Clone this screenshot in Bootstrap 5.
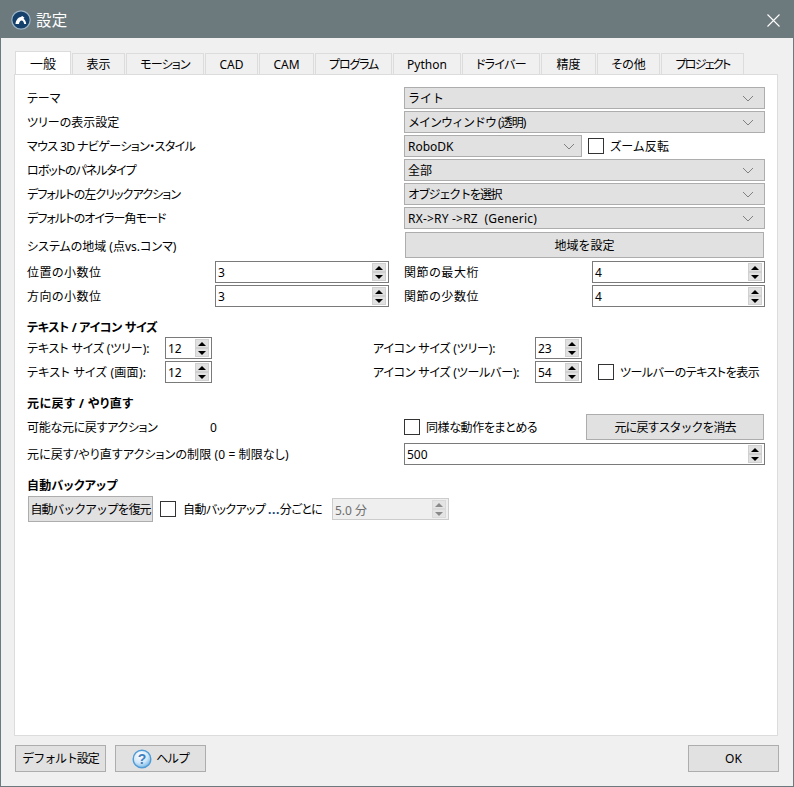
<!DOCTYPE html>
<html lang="ja">
<head>
<meta charset="utf-8">
<title>設定</title>
<link href="https://cdn.jsdelivr.net/npm/bootstrap@5.3.0/dist/css/bootstrap.min.css" rel="stylesheet">
<style>
html,body{margin:0;padding:0;background:#f0f0f0;overflow:hidden}
body{font-family:"Noto Sans","Noto Sans CJK JP",sans-serif;font-size:12px;line-height:18px;color:#000;font-feature-settings:"palt";white-space:nowrap}
.win{width:794px;height:787px;border:1px solid #6c797d;border-top:0;background:#f0f0f0}
.titlebar{height:38px;background:#6c797d;color:#fff;font-size:15.5px;padding:2px 13px 0 10px}
.titlebar span{margin-left:5px;letter-spacing:.3px}
.main{padding:0 15px 0 13px}
.tabbar{height:23px;margin:13px 0 0 1px;flex-wrap:nowrap;border:0}
.tabbar .nav-link{height:21px;margin:0 1px 0 0;padding:1px 0 0;border:1px solid #dcdcdc;border-bottom:0;border-radius:0;background:#f0f0f0;color:#000;font-size:12px;line-height:20px;text-align:center}
.tabbar .nav-link.active{height:23px;background:#fff;color:#000;font-size:13px;border-color:#dcdcdc;margin-bottom:0}
.tabbar .nav-item{display:flex;align-items:flex-end}
.pane{height:662px;background:#fff;border:1px solid #dcdcdc;padding:12px 12px 0}
.rw{height:22px;margin-bottom:2px}
.lab1{width:377px;flex:none}
.txt{padding-top:1px}
.form-select.dd{height:22px;min-height:0;padding:1px 0 0 3px;border:1px solid #adadad;border-radius:0;background-color:#e1e1e1;font-size:12px;line-height:19px;color:#000;background-size:12px 7px;background-position:right 10px center;background-image:url("data:image/svg+xml,%3Csvg xmlns='http://www.w3.org/2000/svg' viewBox='0 0 12 7'%3E%3Cpath d='M1 1l5 5 5-5' fill='none' stroke='%23808080'/%3E%3C/svg%3E");flex:1 1 0;box-shadow:none}
.dd.narrow{flex:0 0 178px;width:178px;background-position:right 6px center}
.btn.qbtn{--bs-btn-padding-x:0;--bs-btn-padding-y:0;--bs-btn-font-size:12px;--bs-btn-line-height:18px;--bs-btn-border-radius:0;--bs-btn-bg:#e1e1e1;--bs-btn-border-color:#adadad;--bs-btn-color:#000;--bs-btn-hover-bg:#e1e1e1;--bs-btn-hover-border-color:#adadad;height:26px;padding-top:1px}
.regionbtn{width:359px;margin:1px 0 3px 1px}
.spin{height:22px;border:1px solid #7a7a7a;background:#fff;padding:1px 2px 1px 0;flex:none}
.spin input{flex:1 1 0;min-width:0;border:0;padding:1px 0 0 2px;height:18px;font-size:12px;line-height:17px;background:transparent;color:#000;box-shadow:none;border-radius:0}
.arrows{width:14px;height:18px;margin-left:auto;flex:none}
.arrows i{display:flex;align-items:center;justify-content:center;height:9px;background:#e1e1e1;border:1px solid #d0d0d0}
.arrows i::before{content:"";border-left:4px solid transparent;border-right:4px solid transparent}
.arrows i:first-child::before{border-bottom:4px solid #000}
.arrows i:last-child::before{border-top:4px solid #000}
.spin.off{border-color:#ccc;background:#efefef}
.spin.off input{color:#6d6d6d;background:transparent}
.spin.off i{background:#e4e4e4;border-color:#dadada}
.spin.off i:first-child::before{border-bottom-color:#8a8a8a}
.spin.off i:last-child::before{border-top-color:#8a8a8a}
.w174{width:174px}.w173{width:173px}.w47{width:47px}.w117{width:117px}
.lab188{width:188px;flex:none}.lab138{width:138px;flex:none}.lab161{width:161px;flex:none}.lab162{width:162px;flex:none}.lab183{width:183px;flex:none}.lab194{width:194px;flex:none}
.chk.form-check-input{width:16px;height:16px;margin:0;border:1px solid #333;border-radius:0;flex:none;background-color:#fff;float:none}
.gap6{margin-left:6px}
.gap7{margin-left:7px}
.chk.form-check-input.gap6{margin-left:6px}
.chk.form-check-input.gap7{margin-left:7px}
.cap{font-weight:700;height:18px;line-height:18px;margin:11px 0 1px;padding-top:1px}
.cap.two{margin-bottom:2px}
.tallrw{height:26px;margin-bottom:3px}
.undobtn{width:178px;margin:0 1px 0 auto}
.bkbtn{width:125px;margin-left:1px}
.foot{margin:9px -1px 0 1px}
.fbtn{width:91px;height:27px!important}
.ms9{margin-left:9px}
.dots{color:#0b3e7a;font-weight:700;letter-spacing:.6px}
.wide{flex:1 1 0}
.bktxt{width:149px;flex:none}
.tw0{width:56px}.tw1{width:53px}.tw2{width:78px}.tw3{width:53px}.tw4{width:55px}.tw5{width:77px}.tw6{width:68px}.tw7{width:78px}.tw8{width:55px}.tw9{width:63px}.tw10{width:83px}
.tk-17{letter-spacing:-1.7px}.tk-12{letter-spacing:-1.2px}.tk-11{letter-spacing:-1.1px}.tk-10{letter-spacing:-1px}.tk-9{letter-spacing:-.9px}.tk-8{letter-spacing:-.8px}.tk-6{letter-spacing:-.6px}.tk-5{letter-spacing:-.5px}.tk-4{letter-spacing:-.4px}.tk-3{letter-spacing:-.3px}.tk-2{letter-spacing:-.2px}.tk-1{letter-spacing:-.1px}
.tk1{letter-spacing:.1px}.tk2{letter-spacing:.2px}.tk3{letter-spacing:.3px}.tk5{letter-spacing:.5px}.tk6{letter-spacing:.6px}
</style>
</head>
<body>
<div class="win d-flex flex-column">
  <div class="titlebar d-flex align-items-center">
    <svg width="20" height="20" viewBox="0 0 20 20" aria-hidden="true"><circle cx="10" cy="10" r="9.2" fill="#15406b" stroke="#9db4c4" stroke-width="1.2"/><path d="M4.500 14c.3-3.500 2.200-6.500 5.200-7l1.600-1 2.200 1.800-1 .9c1.700 1 2.500 3.300 2.700 5.300h-2c-.3-1.800-1.300-3.300-2.600-3.400-1.300 0-2.300 1.500-2.600 3.400z" fill="#fff"/></svg>
    <span>設定</span>
    <svg class="ms-auto" width="13" height="13" viewBox="0 0 13 13" aria-hidden="true"><path d="M.5.500l12 12M12.500.500l-12 12" stroke="#fff" stroke-width="1.100" fill="none"/></svg>
  </div>
  <div class="main">
    <ul class="nav nav-tabs tabbar">
      <li class="nav-item"><a class="nav-link active tw0">一般</a></li>
      <li class="nav-item"><a class="nav-link tw1">表示</a></li>
      <li class="nav-item"><a class="nav-link tw2 tk-8">モーション</a></li>
      <li class="nav-item"><a class="nav-link tw3">CAD</a></li>
      <li class="nav-item"><a class="nav-link tw4">CAM</a></li>
      <li class="nav-item"><a class="nav-link tw5 tk-12">プログラム</a></li>
      <li class="nav-item"><a class="nav-link tw6">Python</a></li>
      <li class="nav-item"><a class="nav-link tw7 tk-6">ドライバー</a></li>
      <li class="nav-item"><a class="nav-link tw8">精度</a></li>
      <li class="nav-item"><a class="nav-link tw9">その他</a></li>
      <li class="nav-item"><a class="nav-link tw10 tk-17">プロジェクト</a></li>
    </ul>
    <div class="pane">
      <div class="rw d-flex align-items-center"><div class="lab1 txt">テーマ</div><select class="form-select dd"><option>ライト</option></select></div>
      <div class="rw d-flex align-items-center"><div class="lab1 txt">ツリーの表示設定</div><select class="form-select dd tk-10"><option>メインウィンドウ (透明)</option></select></div>
      <div class="rw d-flex align-items-center"><div class="lab1 txt tk-6">マウス 3D ナビゲーション・スタイル</div><select class="form-select dd narrow"><option>RoboDK</option></select><input class="form-check-input chk gap6" type="checkbox" aria-label="ズーム反転"><span class="gap6 txt tk3">ズーム反転</span></div>
      <div class="rw d-flex align-items-center"><div class="lab1 txt tk-10">ロボットのパネルタイプ</div><select class="form-select dd"><option>全部</option></select></div>
      <div class="rw d-flex align-items-center"><div class="lab1 txt tk-9">デフォルトの左クリックアクション</div><select class="form-select dd tk-17"><option>オブジェクトを選択</option></select></div>
      <div class="rw d-flex align-items-center"><div class="lab1 txt tk-9">デフォルトのオイラー角モード</div><select class="form-select dd tk2"><option>RX-&gt;RY -&gt;RZ &nbsp;(Generic)</option></select></div>
      <div class="d-flex align-items-center"><div class="lab1 txt">システムの地域 (点vs.コンマ)</div><button class="btn qbtn regionbtn" type="button">地域を設定</button></div>
      <div class="rw d-flex align-items-center">
        <div class="lab188 txt tk5">位置の小数位</div>
        <div class="spin w174 d-flex"><input class="form-control" value="3" aria-label="位置の小数位"><span class="arrows"><i></i><i></i></span></div>
        <div class="lab188 ms-auto txt tk6">関節の最大桁</div>
        <div class="spin w173 d-flex"><input class="form-control" value="4" aria-label="関節の最大桁"><span class="arrows"><i></i><i></i></span></div>
      </div>
      <div class="rw d-flex align-items-center">
        <div class="lab188 txt tk5">方向の小数位</div>
        <div class="spin w174 d-flex"><input class="form-control" value="3" aria-label="方向の小数位"><span class="arrows"><i></i><i></i></span></div>
        <div class="lab188 ms-auto txt tk6">関節の少数位</div>
        <div class="spin w173 d-flex"><input class="form-control" value="4" aria-label="関節の少数位"><span class="arrows"><i></i><i></i></span></div>
      </div>

      <div class="cap tk-3">テキスト / アイコン サイズ</div>
      <div class="rw d-flex align-items-center">
        <div class="lab138 txt tk-1">テキスト サイズ (ツリー):</div>
        <div class="spin w47 d-flex"><input class="form-control" value="12" aria-label="テキスト サイズ (ツリー)"><span class="arrows"><i></i><i></i></span></div>
        <div class="lab161"></div>
        <div class="lab162 txt tk-2">アイコン サイズ (ツリー):</div>
        <div class="spin w47 d-flex"><input class="form-control" value="23" aria-label="アイコン サイズ (ツリー)"><span class="arrows"><i></i><i></i></span></div>
      </div>
      <div class="rw d-flex align-items-center">
        <div class="lab138 txt tk3">テキスト サイズ (画面):</div>
        <div class="spin w47 d-flex"><input class="form-control" value="12" aria-label="テキスト サイズ (画面)"><span class="arrows"><i></i><i></i></span></div>
        <div class="lab161"></div>
        <div class="lab162 txt tk-2">アイコン サイズ (ツールバー):</div>
        <div class="spin w47 d-flex"><input class="form-control" value="54" aria-label="アイコン サイズ (ツールバー)"><span class="arrows"><i></i><i></i></span></div>
        <input class="form-check-input chk ms-3" type="checkbox" aria-label="ツールバーのテキストを表示"><span class="gap6 txt tk-5">ツールバーのテキストを表示</span>
      </div>

      <div class="cap two tk5">元に戻す / やり直す</div>
      <div class="tallrw d-flex align-items-center">
        <div class="lab183 txt tk-3">可能な元に戻すアクション</div>
        <div class="lab194 txt">0</div>
        <input class="form-check-input chk" type="checkbox" aria-label="同様な動作をまとめる"><span class="gap6 txt tk-4">同様な動作をまとめる</span>
        <button class="btn qbtn undobtn tk-10" type="button">元に戻すスタックを消去</button>
      </div>
      <div class="rw d-flex align-items-center">
        <div class="lab1 txt tk1">元に戻す/やり直すアクションの制限 (0 = 制限なし)</div>
        <div class="spin wide d-flex"><input class="form-control" value="500" aria-label="制限"><span class="arrows"><i></i><i></i></span></div>
      </div>

      <div class="cap two tk2">自動バックアップ</div>
      <div class="tallrw d-flex align-items-center">
        <button class="btn qbtn bkbtn tk-11" type="button">自動バックアップを復元</button>
        <input class="form-check-input chk gap7" type="checkbox" aria-label="自動バックアップ"><span class="gap7 txt bktxt tk-6">自動バックアップ <span class="dots">...</span>分ごとに</span>
        <div class="spin off w117 d-flex"><input class="form-control" value="5.0 分" disabled aria-label="分"><span class="arrows"><i></i><i></i></span></div>
      </div>
    </div>
    <div class="foot d-flex">
      <button class="btn qbtn fbtn tk-11" type="button">デフォルト設定</button>
      <button class="btn qbtn fbtn ms9 d-flex align-items-center justify-content-center" type="button">
        <svg width="20" height="20" viewBox="0 0 20 20" aria-hidden="true"><defs><radialGradient id="hg" cx=".4" cy=".3" r=".8"><stop offset="0" stop-color="#fff"/><stop offset=".55" stop-color="#cfe6f8"/><stop offset="1" stop-color="#58a6dd"/></radialGradient></defs><circle cx="10" cy="10" r="8.800" fill="url(#hg)" stroke="#4f9bd6" stroke-width="1.400"/><text x="10" y="15" text-anchor="middle" font-family="Liberation Sans" font-weight="700" font-size="14" fill="#3f7fc0">?</text></svg>
        <span class="ms-1 tk-12">ヘルプ</span>
      </button>
      <button class="btn qbtn fbtn ms-auto" type="button">OK</button>
    </div>
  </div>
</div>
<script src="https://cdn.jsdelivr.net/npm/bootstrap@5.3.0/dist/js/bootstrap.bundle.min.js"></script>
</body>
</html>
